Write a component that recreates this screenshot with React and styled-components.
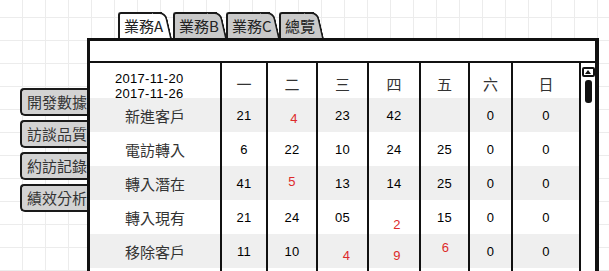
import React from "react";
import styled, { createGlobalStyle } from "styled-components";

const GlobalStyle = createGlobalStyle`
  html, body {
    margin: 0;
    padding: 0;
  }
  body {
    width: 609px;
    height: 271px;
    overflow: hidden;
    background: #fff;
    font-family: "Noto Sans CJK TC", "Liberation Sans", sans-serif;
  }
`;

const Page = styled.div`
  width: 609px;
  height: 271px;
  overflow: hidden;
  display: flex;
  background-color: #fff;
  background-image: linear-gradient(to right, #ececec 1px, transparent 1px),
    linear-gradient(to bottom, #ececec 1px, transparent 1px);
  background-size: 23px 23px;
  background-position: 22px 17px;
`;

/* left vertical tabs */
const Sidebar = styled.div`
  width: 87px;
  flex: none;
  box-sizing: border-box;
  padding: 88px 0 0 20px;
  display: flex;
  flex-direction: column;
  gap: 4px;
`;

const SideTab = styled.div`
  height: 28px;
  box-sizing: border-box;
  border: 2px solid #1a1a1a;
  border-right: none;
  border-radius: 4px 0 0 5px;
  background: #d3d3d3;
  color: #333;
  font-size: 15px;
  line-height: 23px;
  padding-left: 5px;
  white-space: nowrap;
  overflow: hidden;
`;

/* main column */
const Main = styled.div`
  width: 512px;
  flex: none;
  display: flex;
  flex-direction: column;
`;

const TabRow = styled.div`
  height: 38px;
  box-sizing: border-box;
  padding: 12px 0 0 31px;
  display: flex;
  align-items: flex-end;
`;

const Tab = styled.div`
  position: relative;
  z-index: ${(p) => (p.$active ? 2 : 1)};
  width: ${(p) => p.$w}px;
  height: 26px;
  margin-right: ${(p) => p.$gap}px;
  box-sizing: border-box;
  padding-left: 4px;
  border: 2px solid #1a1a1a;
  border-right: none;
  border-bottom: none;
  border-top-left-radius: 3px;
  background: ${(p) => (p.$active ? "#fff" : "#c9c9c9")};
  color: #222;
  font-size: 15px;
  line-height: 23px;
  white-space: nowrap;

  &::after {
    content: "";
    position: absolute;
    z-index: -1;
    top: -2px;
    right: -4px;
    width: 14px;
    height: 26px;
    box-sizing: border-box;
    background: inherit;
    border-top: 2px solid #1a1a1a;
    border-right: 2px solid #1a1a1a;
    border-top-right-radius: 7px;
    transform: skewX(13deg);
    transform-origin: top left;
  }
`;

const Panel = styled.div`
  flex: 1;
  display: flex;
  flex-direction: column;
  position: relative;
  z-index: 3;
`;

const TopBar = styled.div`
  height: 25px;
  flex: none;
  box-sizing: border-box;
  border: 3px solid #111;
  border-bottom-width: 2px;
  border-right-width: 4px;
  background: #fff;
`;

const Frame = styled.div`
  flex: 1;
  display: flex;
  box-sizing: border-box;
  border-left: 3px solid #111;
  border-right: 4px solid #111;
  background: #fff;
  overflow: hidden;
`;

const Table = styled.div`
  width: 489px;
  flex: none;
  display: flex;
  flex-direction: column;
`;

const Row = styled.div`
  display: grid;
  grid-template-columns: 130px 46px 50px 51px 52px 49px 43px 68px;
  height: ${(p) => p.$h}px;
  flex: none;
  background: ${(p) => (p.$shade ? "#efefef" : "#fff")};
`;

const Cell = styled.div`
  display: flex;
  align-items: center;
  justify-content: center;
  border-left: ${(p) => (p.$line ? "2px solid #111" : "none")};
  min-width: 0;
`;

const DateCell = styled.div`
  display: flex;
  flex-direction: column;
  align-items: flex-start;
  padding: 8px 0 0 25px;
  font-family: "Liberation Sans", Arial, sans-serif;
  font-size: 13px;
  line-height: 15px;
  letter-spacing: 0.3px;
  color: #000;
`;

const DayName = styled.span`
  font-size: 15px;
  color: #333;
  padding-top: 3px;
`;

const Label = styled.span`
  font-size: 15px;
  color: #333;
`;

const Num = styled.span`
  font-family: "Liberation Sans", Arial, sans-serif;
  font-size: 13px;
  letter-spacing: 0.3px;
  color: ${(p) => (p.$red ? "#dd2a2a" : "#000")};
  transform: translate(${(p) => p.$dx || 0}px, ${(p) => p.$dy || 0}px);
`;

const Scrollbar = styled.div`
  flex: 1;
  box-sizing: border-box;
  border-left: 2px solid #111;
  display: flex;
  flex-direction: column;
  align-items: center;
  padding-top: 4px;
  gap: 3px;
`;

const ScrollUp = styled.div`
  width: 13px;
  height: 10px;
  box-sizing: border-box;
  border: 2px solid #111;
  border-radius: 2px;
  display: flex;
  align-items: center;
  justify-content: center;
  &::before {
    content: "";
    border-left: 3.5px solid transparent;
    border-right: 3.5px solid transparent;
    border-bottom: 4px solid #111;
  }
`;

const Thumb = styled.div`
  width: 7px;
  height: 23px;
  background: #111;
  border-radius: 3px;
`;

const tabs = [
  { name: "業務A", w: 44, gap: 11, active: true },
  { name: "業務B", w: 44, gap: 9 },
  { name: "業務C", w: 44, gap: 9 },
  { name: "總覽", w: 35, gap: 0 },
];

const sideTabs = ["開發數據", "訪談品質", "約訪記錄", "績效分析"];

const days = ["一", "二", "三", "四", "五", "六", "日"];

const rows = [
  {
    label: "新進客戶",
    cells: [{ v: "21" }, { v: "4", red: true, dx: 2, dy: 3 }, { v: "23" }, { v: "42" }, { v: "" }, { v: "0" }, { v: "0" }],
  },
  {
    label: "電訪轉入",
    cells: [{ v: "6" }, { v: "22" }, { v: "10" }, { v: "24" }, { v: "25" }, { v: "0" }, { v: "0" }],
  },
  {
    label: "轉入潛在",
    cells: [{ v: "41" }, { v: "5", red: true, dy: -2 }, { v: "13" }, { v: "14" }, { v: "25" }, { v: "0" }, { v: "0" }],
  },
  {
    label: "轉入現有",
    cells: [{ v: "21" }, { v: "24" }, { v: "05" }, { v: "2", red: true, dx: 3, dy: 7 }, { v: "15" }, { v: "0" }, { v: "0" }],
  },
  {
    label: "移除客戶",
    cells: [{ v: "11" }, { v: "10" }, { v: "4", red: true, dx: 4, dy: 4 }, { v: "9", red: true, dx: 3, dy: 4 }, { v: "6", red: true, dx: 1, dy: -4 }, { v: "0" }, { v: "0" }],
  },
  {
    label: "",
    cells: [{ v: "" }, { v: "" }, { v: "" }, { v: "" }, { v: "" }, { v: "" }, { v: "" }],
  },
];

function App() {
  return (
    <>
      <GlobalStyle />
      <Page>
        <Sidebar>
          {sideTabs.map((t) => (
            <SideTab key={t}>{t}</SideTab>
          ))}
        </Sidebar>
        <Main>
          <TabRow>
            {tabs.map((t) => (
              <Tab key={t.name} $w={t.w} $gap={t.gap} $active={t.active}>
                {t.name}
              </Tab>
            ))}
          </TabRow>
          <Panel>
            <TopBar />
            <Frame>
              <Table>
                <Row $h={35}>
                  <DateCell>
                    <span>2017-11-20</span>
                    <span>2017-11-26</span>
                  </DateCell>
                  {days.map((d) => (
                    <Cell key={d} $line>
                      <DayName>{d}</DayName>
                    </Cell>
                  ))}
                </Row>
                {rows.map((r, i) => (
                  <Row key={i} $h={34} $shade={i % 2 === 0}>
                    <Cell>
                      <Label>{r.label}</Label>
                    </Cell>
                    {r.cells.map((c, j) => (
                      <Cell key={j} $line>
                        <Num $red={c.red} $dx={c.dx} $dy={c.dy}>
                          {c.v}
                        </Num>
                      </Cell>
                    ))}
                  </Row>
                ))}
              </Table>
              <Scrollbar>
                <ScrollUp />
                <Thumb />
              </Scrollbar>
            </Frame>
          </Panel>
        </Main>
      </Page>
    </>
  );
}

export default App;
